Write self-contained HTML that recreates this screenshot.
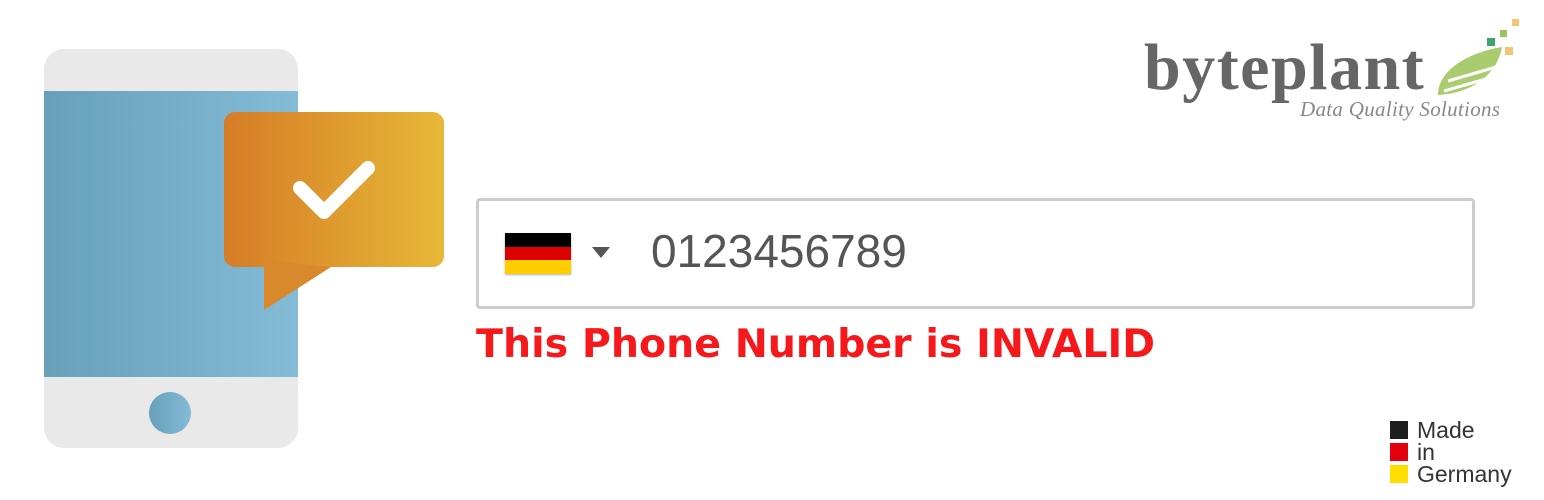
<!DOCTYPE html>
<html><head><style>
body{margin:0;width:1544px;height:500px;background:#fff;position:relative;overflow:hidden;font-family:"Liberation Sans",sans-serif}
.abs{position:absolute}
</style></head><body>
<svg class="abs" style="left:0;top:0" width="460" height="470">
<defs>
<linearGradient id="bl" x1="0" x2="1"><stop offset="0" stop-color="#67a0b8"/><stop offset="1" stop-color="#84bbd7"/></linearGradient>
<linearGradient id="or" x1="0" x2="1"><stop offset="0" stop-color="#d57c27"/><stop offset="1" stop-color="#e7b836"/></linearGradient>
</defs>
<rect x="44" y="49" width="254" height="399" rx="20" fill="#e9e9e9"/>
<rect x="44" y="91" width="254" height="286" fill="url(#bl)"/>
<circle cx="170" cy="413" r="21" fill="url(#bl)"/>
<rect x="224" y="112" width="220" height="155" rx="11" fill="url(#or)"/>
<path d="M264 260 L264 310 L331 267 Z" fill="#d8892b"/>
<path d="M300 188 L324 212 L368 168" stroke="#fff" stroke-width="14" stroke-linecap="round" stroke-linejoin="round" fill="none"/>
</svg>

<div class="abs" style="left:1144px;top:30px;font-family:'Liberation Serif',serif;font-weight:bold;font-size:66px;color:#666;letter-spacing:1.5px">byteplant</div>
<div class="abs" style="left:1300px;top:97px;font-family:'Liberation Serif',serif;font-style:italic;font-size:21px;color:#888;letter-spacing:0.3px">Data Quality Solutions</div>
<svg class="abs" style="left:1430px;top:15px" width="100" height="90">
<path d="M8 80 C8 56 36 38 72 32 C68 56 46 78 8 80 Z" fill="#a9cc6e"/>
<path d="M18 66 L66 52 M14 76 L56 64" stroke="#fff" stroke-width="3"/>
<rect x="57" y="23" width="8" height="8" fill="#3fa46a"/>
<rect x="70" y="15" width="7" height="7" fill="#9cc560"/>
<rect x="82" y="4" width="7" height="7" fill="#f3c676"/>
<rect x="75" y="32" width="8" height="8" fill="#f3c676"/>
</svg>

<div class="abs" style="left:476px;top:198px;width:993px;height:105px;border:3px solid #ccc;border-radius:4px"></div>
<div class="abs" style="left:505px;top:233px;width:66px;height:41px;box-shadow:0 1px 2px rgba(0,0,0,.3)">
<div style="height:14px;background:#000"></div><div style="height:13px;background:#dd0000"></div><div style="height:14px;background:#ffce00"></div></div>
<div class="abs" style="left:592px;top:247px;width:0;height:0;border-left:9px solid transparent;border-right:9px solid transparent;border-top:11px solid #555"></div>
<div class="abs" style="left:651px;top:223px;font-size:46px;color:#555;line-height:56px">0123456789</div>
<div class="abs" style="left:476px;top:320px;font-family:'DejaVu Sans',sans-serif;font-weight:bold;font-size:39.5px;color:#f5191c;line-height:48px">This Phone Number is INVALID</div>

<div class="abs" style="left:1390px;top:421px;width:18px;height:18px;background:#1e1e1e"></div>
<div class="abs" style="left:1390px;top:443px;width:18px;height:18px;background:#e3000f"></div>
<div class="abs" style="left:1390px;top:465px;width:18px;height:18px;background:#ffdd00"></div>
<div class="abs" style="left:1417px;top:419px;font-size:23px;line-height:22px;color:#333">Made<br>in<br>Germany</div>
</body></html>
